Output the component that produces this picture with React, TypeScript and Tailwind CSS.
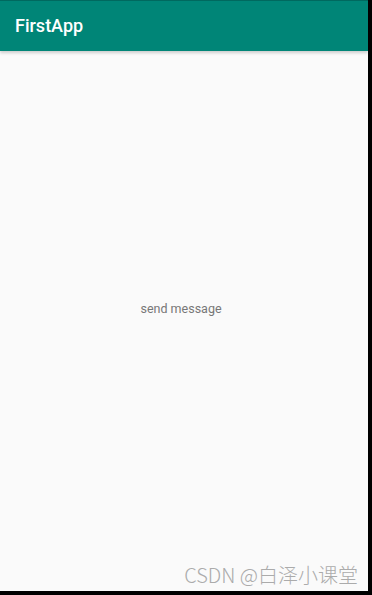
export default function App() {
    return (
        <div className="w-[372px] h-[595px] bg-black flex flex-col overflow-hidden" style={{ fontFamily: "Roboto, 'Noto Sans CJK SC', sans-serif" }}>
            <div className="flex flex-1 min-h-0">
                <div className="relative w-[368px] bg-[#fafafa] flex flex-col">
                    <header className="h-[51px] bg-[#008577] border-t border-[#00695f] flex items-center px-[15px] shadow-[0_2px_3px_rgba(0,0,0,0.18)] z-10">
                        <h1 className="text-white text-[18px] font-medium leading-none">FirstApp</h1>
                    </header>
                    <main className="flex-1 flex flex-col items-center pt-[250px] pr-[6px]">
                        <p className="text-[12.5px] text-[#777777] leading-[16px]">send message</p>
                    </main>
                    <div
                        className="absolute right-[10px] bottom-[3px] text-[20px] leading-[26px] text-[#ababab] font-light"
                        style={{ fontFamily: "'Noto Sans CJK SC', 'Noto Sans', sans-serif" }}
                    >
                        CSDN @白泽小课堂
                    </div>
                </div>
                <div className="flex-1 bg-black" />
            </div>
            <div className="h-[4px] bg-black" />
        </div>
    );
}
